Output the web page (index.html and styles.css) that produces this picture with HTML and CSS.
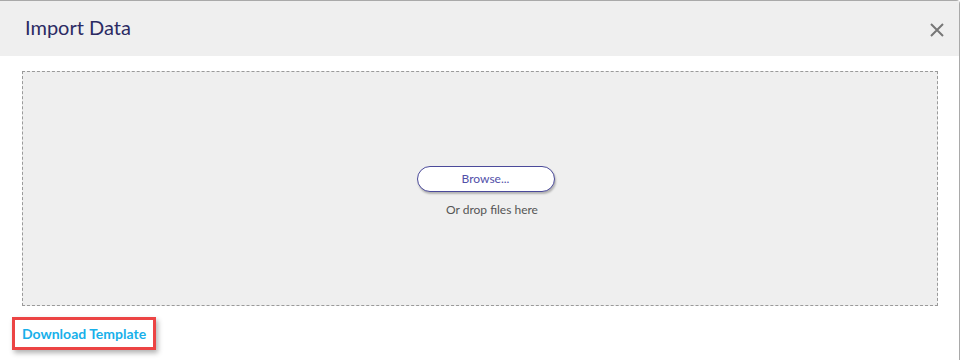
FILE: index.html
```html
<!DOCTYPE html>
<html lang="en">
<head>
    <meta charset="UTF-8">
    <meta name="viewport" content="width=device-width, initial-scale=1.0">
    <title>Import Data</title>
    <link rel="stylesheet" href="styles.css">
</head>
<body>
    <div class="modal">
        <header class="modal-header">
            <h1>Import Data</h1>
            <button class="close" aria-label="Close">
                <svg width="16" height="16" viewBox="0 0 16 16">
                    <path d="M2 2 L14 14 M14 2 L2 14" stroke="#777" stroke-width="2" fill="none"/>
                </svg>
            </button>
        </header>
        <div class="modal-body">
            <div class="dropzone">
                <button class="browse">Browse...</button>
                <p>Or drop files here</p>
            </div>
            <a class="download" href="#">Download Template</a>
        </div>
    </div>
</body>
</html>
```

FILE: styles.css
```css
* {
    margin: 0;
    padding: 0;
    box-sizing: border-box;
}

body {
    font-family: 'Lato', sans-serif;
    background-color: #fff;
    color: #333;
    overflow: hidden;
}

.modal {
    width: 960px;
    height: 372px;
    border: 1px solid #a9a9a9;
    border-left: none;
    border-radius: 0 4px 0 0;
    background: #fff;
}

.modal-header {
    height: 55px;
    background-color: #efefef;
    display: flex;
    align-items: center;
    justify-content: space-between;
    padding: 0 12px 0 25px;
}

.modal-header h1 {
    font-size: 20px;
    font-weight: 400;
    color: #2b2a63;
    margin-top: -3px;
}

.close {
    background: none;
    border: none;
    width: 20px;
    height: 20px;
    display: flex;
    align-items: center;
    justify-content: center;
    cursor: pointer;
    margin-top: 2px;
}

.modal-body {
    padding: 15px 21px 0 22px;
}

.dropzone {
    height: 235px;
    border: 1px dashed #9a9a9a;
    background-color: #efefef;
    display: flex;
    flex-direction: column;
    align-items: center;
    justify-content: center;
    padding-top: 5px;
}

.browse {
    width: 138px;
    height: 26px;
    border: 1px solid #4b4a9a;
    border-radius: 13px;
    background: #fff;
    color: #5250a8;
    font-family: 'Lato', sans-serif;
    font-size: 12px;
    box-shadow: 1px 2px 2px rgba(0, 0, 0, 0.25);
    margin-left: 11px;
}

.dropzone p {
    font-size: 12px;
    color: #555;
    margin: 10px 0 0 24px;
}

.download {
    display: inline-block;
    margin: 11px 0 0 -10px;
    padding: 5px 7px 5px 7px;
    border: 3px solid #ec4444;
    color: #18b0ea;
    font-size: 14px;
    font-weight: 700;
    text-decoration: none;
    box-shadow: 2px 3px 5px rgba(0, 0, 0, 0.3);
}
```
